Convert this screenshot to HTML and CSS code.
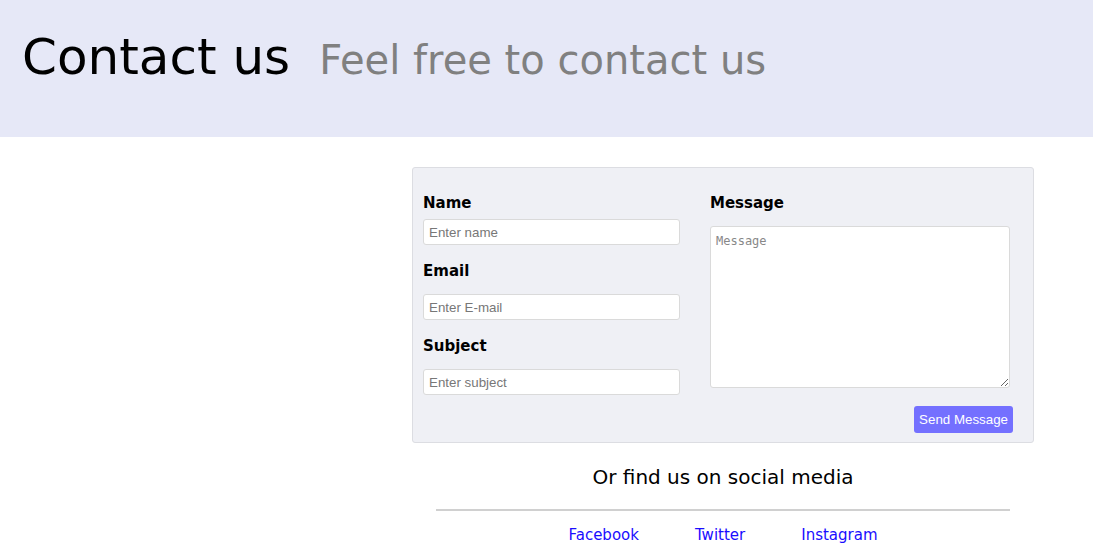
FILE: index.html
```html
<!DOCTYPE html>
<html lang="en">
<head>
<meta charset="utf-8">
<title>Contact us</title>
<link rel="stylesheet" href="styles.css">
</head>
<body>
<header class="banner">
  <h1 class="title">Contact us</h1>
  <span class="subtitle">Feel free to contact us</span>
</header>
<main class="page">
  <div class="map"></div>
  <section class="contact">
    <form class="form">
      <div class="col-left">
        <label class="label label-first" for="name">Name</label>
        <input class="input" id="name" type="text" placeholder="Enter name">
        <label class="label" for="email">Email</label>
        <input class="input" id="email" type="email" placeholder="Enter E-mail">
        <label class="label" for="subject">Subject</label>
        <input class="input" id="subject" type="text" placeholder="Enter subject">
      </div>
      <div class="col-right">
        <label class="label label-first" for="message">Message</label>
        <textarea class="textarea" id="message" placeholder="Message"></textarea>
      </div>
      <div class="actions">
        <button class="btn" type="button">Send Message</button>
      </div>
    </form>
    <div class="social">
      <p class="social-title">Or find us on social media</p>
      <hr class="rule">
      <nav class="links">
        <a href="#">Facebook</a>
        <a href="#">Twitter</a>
        <a href="#">Instagram</a>
      </nav>
    </div>
  </section>
</main>
</body>
</html>
```
FILE: styles.css
```css
* { box-sizing: border-box; }
html, body { margin: 0; padding: 0; }
body {
  font-family: "DejaVu Sans", Verdana, sans-serif;
  color: #000;
  background: #fff;
}
.banner {
  background: #e6e8f7;
  height: 137px;
  display: flex;
  align-items: baseline;
  padding: 28px 0 0 22px;
  gap: 29px;
}
.title {
  margin: 0;
  font-size: 50px;
  font-weight: normal;
  line-height: 58px;
}
.subtitle {
  font-size: 40px;
  color: #808080;
}
.page {
  display: flex;
  padding-top: 30px;
}
.map { width: 412px; flex: none; }
.contact { width: 622px; flex: none; }
.form {
  background: #eff0f5;
  border: 1px solid #dcdde2;
  border-radius: 3px;
  display: grid;
  grid-template-columns: 257px 303px;
  column-gap: 30px;
  padding: 26px 20px 9px 10px;
}
.col-left, .col-right { display: flex; flex-direction: column; }
.label {
  font-weight: bold;
  font-size: 15px;
  line-height: 18px;
  margin: 17px 0 14px;
}
.label-first { margin-top: 0; margin-bottom: 7px; }
.col-right .label-first { margin-bottom: 14px; }
.input {
  width: 257px;
  height: 26px;
  border: 1px solid #dadada;
  border-radius: 3px;
  background: #fff;
  padding: 0 5px;
  font-family: "Liberation Sans", Arial, sans-serif;
  font-size: 13.33px;
}
.input::placeholder { color: #777; }
.textarea {
  width: 300px;
  height: 162px;
  border: 1px solid #dadada;
  border-radius: 3px;
  background: #fff;
  padding: 7px 5px 5px;
  font-family: "DejaVu Sans Mono", monospace;
  font-size: 12px;
}
.textarea::placeholder { color: #888; }
.actions {
  grid-column: 1 / -1;
  display: flex;
  justify-content: flex-end;
  margin-top: 11px;
}
.btn {
  background: #7470ff;
  color: #fff;
  border: none;
  border-radius: 3px;
  height: 27px;
  padding: 0 5px;
  font-family: "Liberation Sans", Arial, sans-serif;
  font-size: 13.33px;
}
.social { text-align: center; }
.social-title {
  margin: 23px 0 0;
  font-size: 20px;
  line-height: 23px;
}
.rule {
  margin: 20px 24px 0;
  border: none;
  border-top: 2px solid #d0d0d0;
  height: 0;
}
.links {
  margin-top: 15px;
  display: flex;
  justify-content: center;
  gap: 56px;
  font-size: 15px;
  line-height: 18px;
}
.links a { color: #1a0dff; text-decoration: none; }
```
